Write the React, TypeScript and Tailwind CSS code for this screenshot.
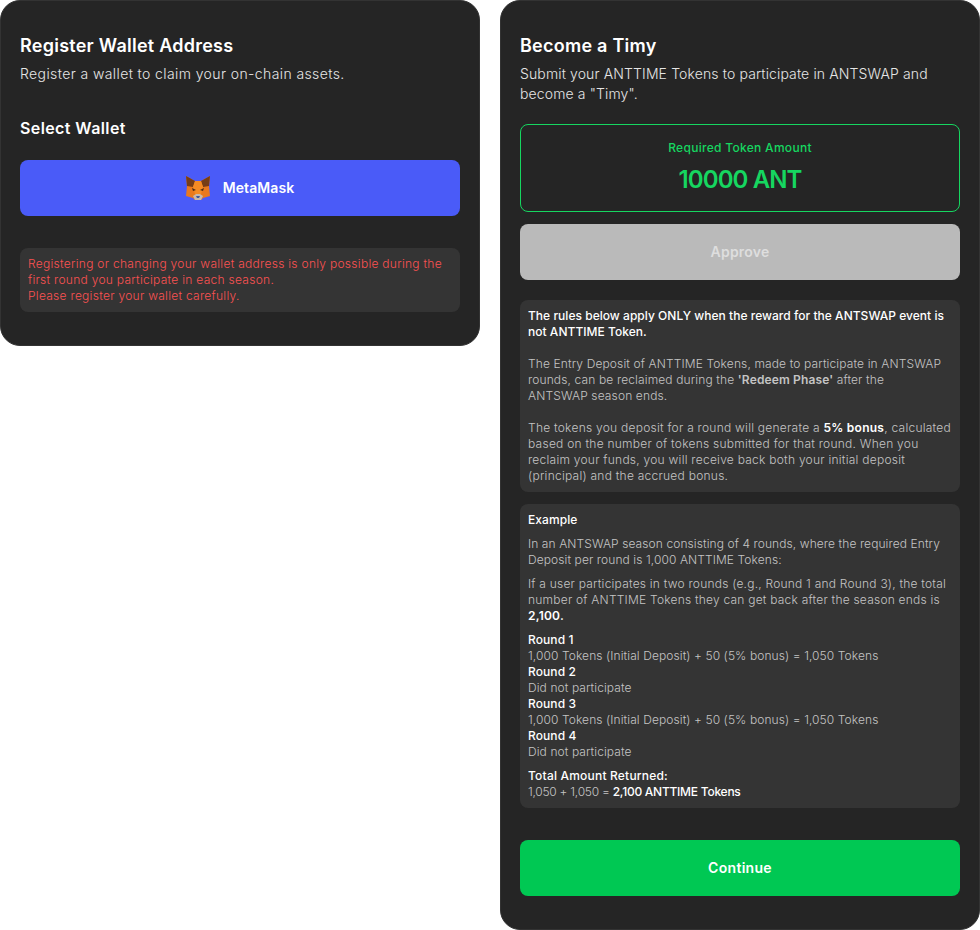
const font = "font-['Inter','Liberation_Sans',sans-serif]";

function FoxIcon() {
  return (
    <svg width="24" height="24" viewBox="0 0 24 24" className="shrink-0">
      {/* head */}
      <path d="M0 0 L9 5 H15 L24 0 L23 10 L24 20 L17 22 L15 24 H9 L7 22 L0 20 L1 10 Z" fill="#e8791e" />
      {/* ears */}
      <path d="M0 0 L9 5 L7 11 L1 10 Z" fill="#763d16" />
      <path d="M24 0 L15 5 L17 11 L23 10 Z" fill="#763d16" />
      {/* forehead and snout */}
      <path d="M7 11 L9 5 H15 L17 11 L15 18 H9 Z" fill="#f48b24" />
      {/* eyes */}
      <path d="M6 12 L10 14 L7 15 Z" fill="#4a2c16" />
      <path d="M18 12 L14 14 L17 15 Z" fill="#4a2c16" />
      {/* muzzle */}
      <path d="M7 20 L10 18 H14 L17 20 L15 24 H9 Z" fill="#c9b8ab" />
      <path d="M10 20 H14 L13 22 H11 Z" fill="#3f5a9e" />
    </svg>
  );
}

function Card({ title, children }: { title: string; children: React.ReactNode }) {
  return (
    <section className="w-[480px] shrink-0 rounded-[20px] border border-[#333333] bg-[#252525] px-[19px] pt-[34px]">
      <h2 className="text-lg leading-[22px] font-semibold text-white tracking-[0.25px]">{title}</h2>
      {children}
    </section>
  );
}

export default function App() {
  return (
    <div className={`${font} flex w-[980px] items-start gap-5 bg-white`}>
      <Card title="Register Wallet Address">
        <p className="mt-[7px] text-sm leading-5 font-light text-[#e5e5e5] tracking-[0.4px]">
          Register a wallet to claim your on-chain assets.
        </p>
        <h3 className="mt-8 text-base leading-6 font-semibold text-white tracking-[0.4px]">Select Wallet</h3>
        <button className="mt-5 flex h-14 w-full items-center justify-center gap-[13px] rounded-lg bg-[#4a5bf8] text-sm font-semibold text-white tracking-[0.1px]">
          <FoxIcon />
          MetaMask
        </button>
        <div className="mt-8 mb-[33px] rounded-lg bg-[#343434] px-2 py-2 text-xs leading-4 font-light text-[#fa5252] tracking-[0.28px]">
          Registering or changing your wallet address is only possible during the first round you participate in each season.
          <br />
          Please register your wallet carefully.
        </div>
      </Card>

      <Card title="Become a Timy">
        <p className="mt-[7px] text-sm leading-5 font-light text-[#e5e5e5] tracking-[0.13px]">
          Submit your ANTTIME Tokens to participate in ANTSWAP and become a "Timy".
        </p>
        <div className="mt-5 flex h-[88px] flex-col items-center justify-center rounded-lg border border-[#16d660]">
          <div className="text-xs leading-4 font-medium text-[#16d660] tracking-[0.3px]">Required Token Amount</div>
          <div className="mt-2 text-2xl leading-8 font-semibold text-[#16d660] tracking-[-0.9px]">10000 ANT</div>
        </div>
        <button className="mt-3 h-14 w-full rounded-lg bg-[#bababa] text-sm font-semibold text-[#dedede] tracking-[0.2px]">Approve</button>

        <div className="mt-5 rounded-lg bg-[#343434] p-2 text-xs leading-4 font-light text-[#c4c4c4] tracking-[0.25px]">
          <p className="font-medium text-white tracking-[0.03px]">
            The rules below apply ONLY when the reward for the ANTSWAP event is not ANTTIME Token.
          </p>
          <p className="mt-4 tracking-[0.13px]">
            The Entry Deposit of ANTTIME Tokens, made to participate in ANTSWAP rounds, can be reclaimed during the{" "}
            <b className="font-semibold">'Redeem Phase'</b> after the
            <br />
            ANTSWAP season ends.
          </p>
          <p className="mt-4">
            The tokens you deposit for a round will generate a <b className="font-semibold text-white">5% bonus</b>,
            calculated based on the number of tokens submitted for that round. When you reclaim your funds, you will
            receive back both your initial deposit (principal) and the accrued bonus.
          </p>
        </div>

        <div className="mt-3 rounded-lg bg-[#343434] p-2 text-xs leading-4 font-light text-[#c4c4c4] tracking-[0.09px]">
          <p className="font-medium text-white">Example</p>
          <p className="mt-2">
            In an ANTSWAP season consisting of 4 rounds, where the required Entry Deposit per round is 1,000 ANTTIME Tokens:
          </p>
          <p className="mt-2 tracking-[0.22px]">
            If a user participates in two rounds (e.g., Round 1 and Round 3), the total number of ANTTIME Tokens they can get back after the season ends is{" "}
            <b className="font-semibold text-white">2,100.</b>
          </p>
          <div className="mt-2">
            <p className="font-medium text-white">Round 1</p>
            <p>1,000 Tokens (Initial Deposit) + 50 (5% bonus) = 1,050 Tokens</p>
            <p className="font-medium text-white">Round 2</p>
            <p>Did not participate</p>
            <p className="font-medium text-white">Round 3</p>
            <p>1,000 Tokens (Initial Deposit) + 50 (5% bonus) = 1,050 Tokens</p>
            <p className="font-medium text-white">Round 4</p>
            <p>Did not participate</p>
          </div>
          <div className="mt-2">
            <p className="font-medium text-white tracking-[0.2px]">Total Amount Returned:</p>
            <p className="tracking-[-0.25px]">
              1,050 + 1,050 = <b className="font-medium text-white">2,100 ANTTIME Tokens</b>
            </p>
          </div>
        </div>

        <button className="mt-8 mb-[33px] h-14 w-full rounded-lg bg-[#00c853] text-sm font-semibold text-white tracking-[0.3px]">Continue</button>
      </Card>
    </div>
  );
}
